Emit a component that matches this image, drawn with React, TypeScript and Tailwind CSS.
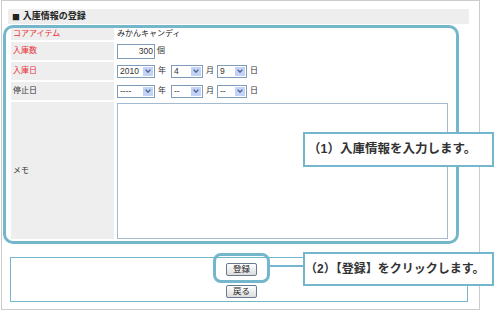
import React from 'react'

const Chevron = () => (
  <svg width="6" height="4" viewBox="0 0 6 4">
    <path d="M0.6 0.6 L3 3.2 L5.4 0.6" stroke="#4d6185" strokeWidth="1.3" fill="none" />
  </svg>
)

function Select({ value, className }: { value: string; className: string }) {
  return (
    <div className={`flex items-stretch h-[13px] border border-[#7f9db9] bg-white ${className}`}>
      <span className="flex-1 flex items-center pl-[2px] text-[8.5px] leading-none">{value}</span>
      <span className="w-[10px] m-[1px] ml-0 bg-[#c3d3f8] flex items-center justify-center">
        <Chevron />
      </span>
    </div>
  )
}

function Row({ label, red, className, children }: { label: string; red?: boolean; className: string; children?: React.ReactNode }) {
  return (
    <div className={`flex gap-[2px] ${className}`}>
      <div className={`w-[103px] bg-[#eeeeee] flex items-center pl-[2px] text-[8px] ${red ? 'text-[#e8333a]' : 'text-[#333]'}`}>
        {label}
      </div>
      <div className="flex-1 flex items-center pl-[1px] text-[8px]">{children}</div>
    </div>
  )
}

function Btn({ label }: { label: string }) {
  return (
    <button className="h-[13px] px-[6px] flex items-center border border-[#6b7b8f] rounded-[2px] bg-gradient-to-b from-white to-[#dcdcdc] text-[8.5px] leading-none text-[#222]">
      {label}
    </button>
  )
}

export default function App() {
  return (
    <div className="relative w-[495px] h-[311px] bg-white overflow-hidden text-[#333] font-[family-name:'Liberation_Sans','Noto_Sans_CJK_JP',sans-serif]">
      <div className="ml-[1px] w-[479px] h-[310px] border border-[#cccccc] pt-[8px] pl-[6px] pr-[10px] flex flex-col">
        <div className="h-[15px] bg-[#eeeeee] flex items-center pl-[4px] font-bold text-[#222]">
          <span className="text-[13px] leading-none mr-[3px]">■</span>
          <span className="text-[9px]">入庫情報の登録</span>
        </div>

        <div className="mt-[4px] ml-[3px] flex flex-col gap-[2px]">
          <Row label="コアアイテム" red className="h-[12px]">
            <span className="text-[#222]">みかんキャンディ</span>
          </Row>
          <Row label="入庫数" red className="h-[18px]">
            <input
              readOnly
              value="300"
              className="w-[38px] h-[15px] border border-[#7f9db9] text-right pr-[1px] text-[8.5px] outline-none"
            />
            <span className="ml-[2px]">個</span>
          </Row>
          <Row label="入庫日" red className="h-[18px]">
            <Select value="2010" className="w-[38px]" />
            <span className="ml-[3px] mr-[5px]">年</span>
            <Select value="4" className="w-[32px]" />
            <span className="ml-[3px] mr-[3px]">月</span>
            <Select value="9" className="w-[30px]" />
            <span className="ml-[3px]">日</span>
          </Row>
          <Row label="停止日" className="h-[18px]">
            <Select value="----" className="w-[38px]" />
            <span className="ml-[3px] mr-[5px]">年</span>
            <Select value="--" className="w-[32px]" />
            <span className="ml-[3px] mr-[3px]">月</span>
            <Select value="--" className="w-[30px]" />
            <span className="ml-[3px]">日</span>
          </Row>
          <Row label="メモ" className="h-[137px]">
            <textarea readOnly className="self-end w-[331px] h-[136px] border border-[#a5b9d0] resize-none outline-none" />
          </Row>
        </div>

        <div className="mt-[18px] ml-[2px] w-[458px] h-[45px] border border-[#74b6cb] flex flex-col items-center pt-[5px] pl-[5px] gap-[9px]">
          <Btn label="登録" />
          <Btn label="戻る" />
        </div>
      </div>

      {/* step highlights and callouts */}
      <div className="absolute left-[3px] top-[25px] w-[456px] h-[219px] border-[3px] border-[#74b6cb] rounded-[10px]" />
      <div className="absolute left-[303px] top-[132px] w-[191px] h-[35px] border-2 border-[#74b6cb] bg-white flex items-center pl-[3px] text-[12.5px] font-bold text-[#333]">
        （1）入庫情報を入力します。
      </div>

      <div className="absolute left-[213px] top-[253px] w-[57px] h-[30px] border-[3px] border-[#74b6cb] rounded-[8px]" />
      <div className="absolute left-[270px] top-[265px] w-[33px] h-[2px] bg-[#74b6cb]" />
      <div className="absolute left-[303px] top-[252px] w-[191px] h-[34px] border-2 border-[#74b6cb] bg-white flex items-center text-[12px] font-bold text-[#333]">
        （2）【登録】をクリックします。
      </div>
    </div>
  )
}
